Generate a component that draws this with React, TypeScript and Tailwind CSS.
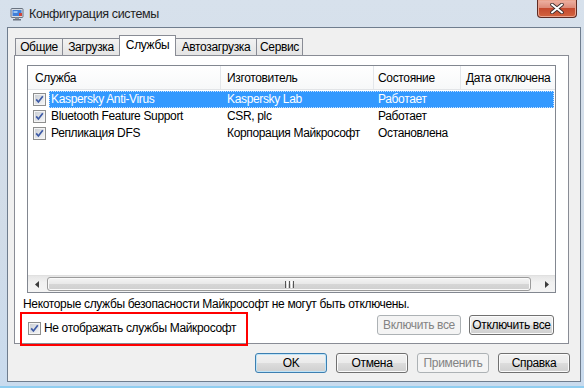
import React from "react";

type Row = { name: string; maker: string; state: string; selected?: boolean };

const rows: Row[] = [
  { name: "Kaspersky Anti-Virus", maker: "Kaspersky Lab", state: "Работает", selected: true },
  { name: "Bluetooth Feature Support", maker: "CSR, plc", state: "Работает" },
  { name: "Репликация DFS", maker: "Корпорация Майкрософт", state: "Остановлена" },
];

function CheckBox() {
  return (
    <svg width="13" height="13" viewBox="0 0 13 13" className="shrink-0">
      <defs>
        <linearGradient id="cbfill" x1="0" y1="0" x2="1" y2="1">
          <stop offset="0" stopColor="#cbcfd5" />
          <stop offset="1" stopColor="#f4f5f6" />
        </linearGradient>
      </defs>
      <rect x="0.5" y="0.5" width="12" height="12" fill="#f4f4f4" stroke="#8e8f8f" />
      <rect x="2" y="2" width="9" height="9" fill="url(#cbfill)" />
      <path d="M3.2 6.4 L5.4 9 L9.8 3.2" stroke="#3d5aa6" strokeWidth="1.7" fill="none" />
    </svg>
  );
}

function AppIcon() {
  return (
    <svg width="14" height="14" viewBox="0 0 14 14">
      <rect x="1" y="1.5" width="12" height="9" rx="1" fill="#d8dde3" stroke="#6a7380" />
      <rect x="2.5" y="3" width="9" height="6" fill="#3f7fd8" />
      <rect x="3.5" y="4" width="4" height="2" fill="#9cc7f4" />
      <rect x="5" y="10.5" width="4" height="1.5" fill="#8a929c" />
      <rect x="3" y="12" width="8" height="1.5" fill="#6a7380" />
      <rect x="9" y="6" width="3" height="3" fill="#d0453a" />
    </svg>
  );
}

function WinButton({
  label,
  width,
  disabled,
  primary,
}: {
  label: string;
  width: string;
  disabled?: boolean;
  primary?: boolean;
}) {
  if (disabled) {
    return (
      <div
        className={`${width} h-[20px] flex items-center justify-center rounded-[3px] border border-[#adb2b5] bg-[#f4f4f4] text-[#838383]`}
      >
        {label}
      </div>
    );
  }
  return (
    <div
      className={`${width} h-[20px] flex items-center justify-center rounded-[3px] border ${
        primary ? "border-[#3c7fb1] shadow-[inset_0_0_0_1px_#bfe4f8]" : "border-[#707070] shadow-[inset_0_0_0_1px_#fbfbfb]"
      } bg-[linear-gradient(to_bottom,#f2f2f2_0%,#ebebeb_50%,#dddddd_51%,#cfcfcf_100%)]`}
    >
      {label}
    </div>
  );
}

function Arrow({ dir }: { dir: "left" | "right" }) {
  return (
    <svg width="4" height="7" viewBox="0 0 4 7">
      {dir === "left" ? <path d="M4 0 L0 3.5 L4 7 Z" fill="#3c3c3c" /> : <path d="M0 0 L4 3.5 L0 7 Z" fill="#3c3c3c" />}
    </svg>
  );
}

function ServiceList() {
  return (
    <div className="w-[529px] h-[228px] border border-[#828790] bg-white flex flex-col overflow-hidden">
      {/* header */}
      <div className="h-[24px] flex shrink-0 border-b border-[#e2e4e7] bg-[linear-gradient(to_bottom,#ffffff,#f7f8f9)]">
        <div className="w-[193px] border-r border-[#e3e6ea] pl-[7px] pt-[5px]">Служба</div>
        <div className="w-[153px] border-r border-[#e3e6ea] pl-[6px] pt-[5px]">Изготовитель</div>
        <div className="w-[87px] border-r border-[#e3e6ea] pl-[4px] pt-[5px]">Состояние</div>
        <div className="flex-1 pl-[5px] pt-[5px] whitespace-nowrap">Дата отключена</div>
      </div>

      <div className="flex flex-col pt-[1px]">
        {rows.map((r) => (
          <div key={r.name} className="h-[17px] flex items-center">
            <div className="w-[21px] pl-[5px] flex items-center">
              <CheckBox />
            </div>
            <div
              className={`flex-1 h-[17px] flex items-center whitespace-nowrap ${
                r.selected ? "bg-[#3399ff] text-white border border-dotted border-[#c9e1ff] mr-[1px]" : "border border-transparent"
              }`}
            >
              <div className="w-[171px] pl-[1px]">{r.name}</div>
              <div className="w-[153px] pl-[6px]">{r.maker}</div>
              <div className="w-[87px] pl-[4px]">{r.state}</div>
            </div>
          </div>
        ))}
      </div>

      {/* horizontal scrollbar */}
      <div className="mt-auto h-[17px] flex shrink-0 bg-[linear-gradient(to_bottom,#e6e6e6,#f1f1f1_40%,#f4f4f4)] border-t border-[#e0e0e0]">
        <div className="w-[17px] flex items-center justify-center">
          <Arrow dir="left" />
        </div>
        <div className="w-[2px]" />
        <div className="w-[484px] my-[1px] rounded-[3px] border border-[#9b9b9b] bg-[linear-gradient(to_bottom,#f4f4f4_0%,#e8e8e8_50%,#d6d6d6_51%,#cfcfcf_100%)] shadow-[inset_0_0_0_1px_#fafafa] flex items-center justify-center gap-[1px]">
          <div className="w-[1px] h-[7px] bg-[#555]" />
          <div className="w-[1px] h-[7px] bg-[#fff]" />
          <div className="w-[1px] h-[7px] bg-[#555]" />
          <div className="w-[1px] h-[7px] bg-[#fff]" />
          <div className="w-[1px] h-[7px] bg-[#555]" />
        </div>
        <div className="w-[7px]" />
        <div className="w-[17px] flex items-center justify-center">
          <Arrow dir="right" />
        </div>
      </div>
    </div>
  );
}

const tabs = [
  { label: "Общие", w: "w-[48px]" },
  { label: "Загрузка", w: "w-[58px]" },
  { label: "Службы", w: "w-[57px]", active: true },
  { label: "Автозагрузка", w: "w-[82px]" },
  { label: "Сервис", w: "w-[47px]" },
];

export default function App() {
  return (
    <div className="relative w-[584px] h-[388px] overflow-hidden bg-[linear-gradient(to_bottom,#d7e1ec,#d1dce8_60%,#c9dbee)] font-['Segoe_UI','Liberation_Sans',sans-serif] text-[12px] leading-[15px] tracking-[-0.35px] text-black flex flex-col">
      {/* title bar */}
      <div className="h-[27px] flex items-start shrink-0">
        <div className="ml-[10px] mt-[7px]">
          <AppIcon />
        </div>
        <div className="ml-[5px] mt-[6px] text-[12.5px] leading-[16px] text-[#1e1e1e]">Конфигурация системы</div>
        <div className="ml-auto mr-[7px] w-[40px] h-[18px] rounded-b-[4px] border border-t-0 border-[#5d2b24] bg-[linear-gradient(to_bottom,#eeb3a5_0%,#dd8b79_45%,#c54a2f_50%,#d2643f_100%)] shadow-[inset_0_0_0_1px_#eaa48f] flex items-center justify-center">
          <svg width="14" height="11" viewBox="0 0 14 11">
            <path d="M2 1.5 L12 9.5 M12 1.5 L2 9.5" stroke="#3a2b2b" strokeWidth="3.6" strokeLinecap="round" />
            <path d="M2 1.5 L12 9.5 M12 1.5 L2 9.5" stroke="#ffffff" strokeWidth="2" strokeLinecap="round" />
          </svg>
        </div>
      </div>

      {/* client area */}
      <div className="ml-[7px] mr-[3px] h-[355px] shrink-0 border border-[#6f7d8e] bg-[#f0f0f0] flex flex-col pl-[6px] pt-[7px]">
        {/* tab strip */}
        <div className="h-[20px] flex items-end pl-[1px]">
          {tabs.map((t, i) =>
            t.active ? (
              <div
                key={t.label}
                className={`${t.w} -ml-px h-[21px] -mb-px relative z-10 bg-white border border-b-0 border-[#898c95] flex justify-center pt-[2px]`}
              >
                {t.label}
              </div>
            ) : (
              <div
                key={t.label}
                className={`${t.w} ${i === 0 ? "" : "-ml-px"} h-[17px] bg-[linear-gradient(to_bottom,#f2f2f2,#e4e4e4)] border border-b-0 border-[#898c95] flex justify-center pt-[1px]`}
              >
                {t.label}
              </div>
            )
          )}
        </div>

        {/* tab page */}
        <div className="w-[555px] h-[289px] border border-[#898c95] bg-white flex flex-col pt-[9px] px-[12px]">
          <ServiceList />
          <div className="mt-[4px] -ml-[4px] whitespace-nowrap">
            Некоторые службы безопасности Майкрософт не могут быть отключены.
          </div>
          <div className="mt-[3px] h-[20px] flex items-start">
            <div className="ml-[1px] mt-[6px] flex items-center gap-[3px]">
              <CheckBox />
              <span>Не отображать службы Майкрософт</span>
            </div>
            <div className="ml-auto mr-[2px] flex gap-[8px]">
              <WinButton label="Включить все" width="w-[84px]" disabled />
              <WinButton label="Отключить все" width="w-[85px]" />
            </div>
          </div>
        </div>

        {/* dialog buttons */}
        <div className="mt-[9px] flex justify-end gap-[9px] pr-[10px]">
          <WinButton label="OK" width="w-[72px]" primary />
          <WinButton label="Отмена" width="w-[72px]" />
          <WinButton label="Применить" width="w-[72px]" disabled />
          <WinButton label="Справка" width="w-[72px]" />
        </div>
      </div>

      <div className="flex-1 border-b-2 border-[#8fcdf0]" />

      {/* highlight annotation */}
      <div className="absolute left-[20px] top-[312px] w-[228px] h-[34px] border-2 border-[#ff0000] pointer-events-none" />
    </div>
  );
}
